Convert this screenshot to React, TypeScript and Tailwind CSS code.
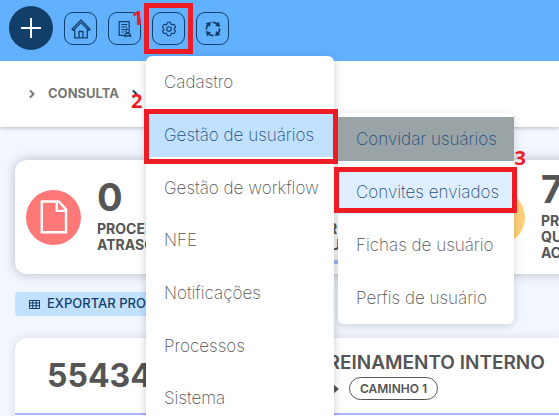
import { clsx } from "clsx";
import { ChevronRight } from "lucide-react";
import { HiOutlineCog6Tooth } from "react-icons/hi2";

const menuItems = [
  "Cadastro",
  "Gestão de usuários",
  "Gestão de workflow",
  "NFE",
  "Notificações",
  "Processos",
  "Sistema",
];

const userItems = [
  "Convidar usuários",
  "Convites enviados",
  "Fichas de usuário",
  "Perfis de usuário",
];

const cards = [
  { value: "0", lines: ["PROCESSOS", "ATRASO"], color: "bg-[#ff7878]" },
  { value: "0", lines: ["PR", "QU"], color: "bg-[#a9b4ff]", active: true },
  { value: "7", lines: ["PR", "QU", "AC"], color: "bg-[#ffcf7a]" },
];

function HomeIcon() {
  return (
    <svg width="20" height="20" viewBox="0 0 20 20" fill="none" stroke="currentColor" strokeWidth="1.3" strokeLinejoin="round">
      <path d="M1 10.2 10 1l9 9.2-1.3 1.2L10 3.6l-7.7 7.8z" />
      <path d="M3.7 10.5v8.3h12.6v-8.3M8 18.8v-6.3h4v6.3" />
    </svg>
  );
}

function ReportIcon() {
  return (
    <svg width="16" height="18" viewBox="0 0 16 18" fill="none" stroke="currentColor" strokeWidth="1.2">
      <path d="M7.5 15.4H2.2V1.6h10v7" />
      <path d="M4.3 4.5h6M4.3 7h6M4.3 9.5h4M4.3 12h3" />
      <circle cx="10.7" cy="11" r="1.8" />
      <path d="M7.8 16.6c0-2 1.2-3.4 2.9-3.4s2.9 1.4 2.9 3.4l-1.6-1-1.3 1-1.3-1z" />
    </svg>
  );
}

function CycleIcon() {
  return (
    <svg width="18" height="18" viewBox="0 0 18 18" fill="none" stroke="currentColor" strokeWidth="1.8">
      <path d="M8.5 2.3c2 0 3.6.6 4.8 1.6M15.7 8.5c0 2-.6 3.6-1.6 4.8M9.5 15.7c-2 0-3.6-.6-4.8-1.6M2.3 9.5c0-2 .6-3.6 1.6-4.8" />
      <path d="M1.5 3.2 7 1.8 5.8 7zM14.8 1.5 16.2 7 11 5.8zM16.5 14.8 11 16.2 12.2 11zM3.2 16.5 1.8 11 7 12.2z" fill="currentColor" stroke="none" />
    </svg>
  );
}

function FileIcon() {
  return (
    <svg width="28" height="34" viewBox="0 0 28 34" fill="none" stroke="white" strokeWidth="2.4">
      <path d="M1.8 1.5h17l7.2 8v22.8H1.8z" />
      <path d="M16.8 1.5v9.4H26" />
    </svg>
  );
}

function TableIcon() {
  return (
    <svg width="11" height="9" viewBox="0 0 11 9" fill="none" stroke="currentColor">
      <path d="M.5.5h10v8H.5zM0 3h11M0 5.7h11M3.8 0v9M7.2 0v9" />
    </svg>
  );
}

function Mark({ className, label, labelClass }: { className: string; label: string; labelClass: string }) {
  return (
    <>
      <span className={clsx("pointer-events-none absolute border-[5px] border-[#ee1c24]", className)} />
      <span className={clsx("pointer-events-none absolute font-['Open_Sans',sans-serif] text-xl leading-5 font-bold text-[#ee1c24]", labelClass)}>
        {label}
      </span>
    </>
  );
}

const toolButton = "flex size-[33px] items-center justify-center rounded-[9px] border border-[#123f69]";
const menuLink = "flex h-11 items-center px-[18px] pt-0.5 text-[17px] font-extralight whitespace-nowrap";

function UserMenu() {
  return (
    <ul className="absolute top-0 left-48 flex w-44 flex-col gap-[9px] rounded-md bg-white py-1 shadow-[0_2px_10px_rgba(0,0,0,0.15)]">
      {userItems.map((item, i) => (
        <li key={item} className="relative">
          <a
            href="#"
            className={clsx(menuLink, i === 0 && "bg-[#9aa3a6] text-[#1f4e7a]", i === 1 && "bg-[#dfefff] text-[#1f4e7a]", i > 1 && "text-[#555]")}
          >
            {item}
          </a>
          {i === 1 && <Mark className="-top-[3px] -right-[3px] bottom-px -left-1" label="3" labelClass="-top-[22px] -right-3" />}
        </li>
      ))}
    </ul>
  );
}

function SettingsMenu() {
  return (
    <ul className="absolute top-11 -left-1.5 z-10 flex h-[368px] w-[188px] flex-col justify-between rounded-md bg-white py-1 shadow-[0_2px_10px_rgba(0,0,0,0.2)]">
      {menuItems.map((item, i) => (
        <li key={item} className="relative">
          <a href="#" className={clsx(menuLink, i === 1 ? "bg-[#c2e1ff] text-[#1f4e7a]" : "text-[#555]")}>
            {item}
          </a>
          {i === 1 && (
            <>
              <UserMenu />
              <Mark className="-top-1 -right-1 -bottom-[7px] -left-0.5" label="2" labelClass="-top-[22px] -left-[15px]" />
            </>
          )}
        </li>
      ))}
    </ul>
  );
}

export default function App() {
  return (
    <div className="h-screen overflow-hidden bg-[#f2f7ff] font-[Inter,sans-serif] text-[#555]">
      <header className="relative z-20 flex h-[61px] items-start gap-[11px] bg-[#62b1ff] px-[9px] pt-1.5 text-[#123f69]">
        <button aria-label="Novo" className="flex size-11 items-center justify-center rounded-full bg-[#123f69]">
          <svg width="20" height="20" viewBox="0 0 20 20" stroke="white" strokeWidth="2">
            <path d="M10 0v20M0 10h20" />
          </svg>
        </button>
        <nav className="flex gap-[11px] pt-1.5">
          <button aria-label="Início" className={toolButton}><HomeIcon /></button>
          <button aria-label="Relatórios" className={toolButton}><ReportIcon /></button>
          <div className="relative">
            <button aria-label="Configurações" className={toolButton}><HiOutlineCog6Tooth size={18} /></button>
            <Mark className="-inset-x-2 -inset-y-[9px]" label="1" labelClass="-top-1 -left-5" />
            <SettingsMenu />
          </div>
          <button aria-label="Atualizar" className={toolButton}><CycleIcon /></button>
        </nav>
      </header>

      <div className="relative flex h-[66px] items-center bg-white pl-[26px] text-[13px] font-bold text-[#777] shadow-[0_1px_4px_rgba(0,0,0,0.25)]">
        <ChevronRight size={12} strokeWidth={4} />
        <a href="#" className="mx-2.5">CONSULTA</a>
        <ChevronRight size={12} strokeWidth={4} className="text-[#123f69]" />
      </div>

      <main className="pt-[33px] pl-[15px]">
        <div className="flex gap-4">
          {cards.map((card, i) => (
            <section key={i} className="relative flex h-[114px] w-[206px] shrink-0 items-center gap-4 rounded-xl bg-white pl-[11px] shadow-[0_0_12px_rgba(0,0,0,0.25)]">
              <div className={clsx("flex size-[55px] shrink-0 items-center justify-center rounded-full", card.color)}>
                <FileIcon />
              </div>
              <div>
                <p className="mb-2 text-[38px] leading-8 font-bold">{card.value}</p>
                {card.lines.map((line) => (
                  <p key={line} className="text-sm leading-4 font-bold whitespace-nowrap">{line}</p>
                ))}
              </div>
              {card.active && <span className="absolute inset-x-5 bottom-2.5 h-1 bg-[#a9b4ff]" />}
            </section>
          ))}
        </div>

        <button className="mt-[18px] flex h-6 items-center gap-[7px] rounded bg-[#c2e1ff] px-3.5 text-[13px] font-medium text-[#123f69]">
          <TableIcon />
          EXPORTAR PROCESSOS
        </button>

        <section className="mt-[22px] h-40 rounded-l-xl bg-white shadow-[0_0_10px_rgba(0,0,0,0.12)]">
          <div className="flex h-[77px] items-center border-b-2 border-[#a9b4ff] pl-8">
            <p className="w-[268px] text-[32px] font-bold">55434</p>
            <div>
              <h2 className="text-[19px] leading-6 font-semibold whitespace-nowrap">TREINAMENTO INTERNO</h2>
              <div className="mt-0.5 flex items-center gap-2.5">
                <svg width="24" height="10" viewBox="0 0 24 10" fill="currentColor">
                  <path d="M0 4h18V0l6 5-6 5V6H0z" />
                </svg>
                <span className="rounded-full border border-[#555] px-2.5 text-xs leading-[21px] font-semibold">CAMINHO 1</span>
              </div>
            </div>
          </div>
        </section>
      </main>
    </div>
  );
}
